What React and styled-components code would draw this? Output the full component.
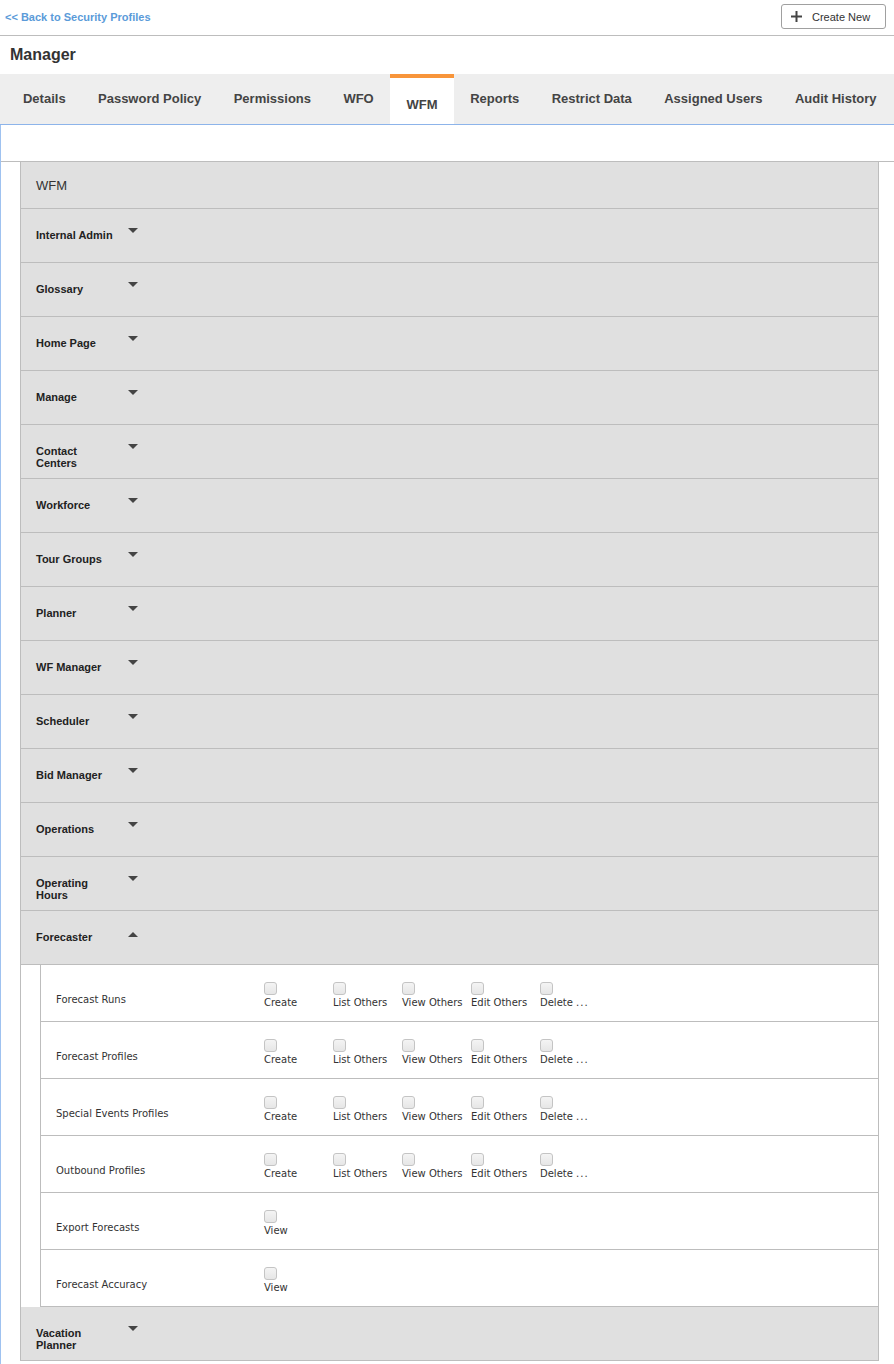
import React from "react";
import styled, { createGlobalStyle } from "styled-components";

const Global = createGlobalStyle`
  html, body { margin: 0; padding: 0; background: #fff; }
  body { font-family: "Liberation Sans", Arial, sans-serif; color: #333; }
  * { box-sizing: border-box; }
`;

const Page = styled.div`
  width: 894px;
`;

const TopBar = styled.div`
  height: 36px;
  border-bottom: 1px solid #bdbdbd;
  display: flex;
  align-items: flex-start;
  justify-content: space-between;
  padding: 0 8px 0 5px;
`;

const BackLink = styled.a`
  font-size: 11px;
  font-weight: bold;
  color: #5b9bd9;
  text-decoration: none;
  line-height: 12px;
  margin-top: 11px;
`;

const CreateButton = styled.button`
  margin-top: 4px;
  height: 25px;
  width: 105px;
  border: 1px solid #a0a0a0;
  border-radius: 3px;
  background: #fff;
  display: flex;
  align-items: center;
  padding: 0 0 0 9px;
  gap: 10px;
  font-family: "Liberation Sans", Arial, sans-serif;
  font-size: 11px;
  color: #333;
`;

const Title = styled.h1`
  margin: 0;
  height: 38px;
  padding: 9px 0 0 10px;
  font-size: 16px;
  line-height: 19px;
  font-weight: bold;
  color: #333;
`;

const TabBar = styled.div`
  height: 51px;
  background: #eeeeee;
  border-bottom: 1px solid #8db4ea;
  display: flex;
  padding-left: 6.8px;
`;

const Tab = styled.div`
  height: 50px;
  padding: 17px 16.2px 0;
  font-size: 13px;
  line-height: 15px;
  font-weight: bold;
  color: #444;
  white-space: nowrap;
  background: ${(p) => (p.$active ? "#fff" : "transparent")};
  border-top: ${(p) => (p.$active ? "4px solid #f8953a" : "0")};
  ${(p) => (p.$active ? "padding: 19px 16.5px 0;" : "")}
`;

const Content = styled.div`
  border-left: 1px solid #9fc2f0;
  padding-bottom: 40px;
`;

const Toolbar = styled.div`
  height: 37px;
  border-bottom: 1px solid #bdbdbd;
`;

const Panel = styled.div`
  margin-left: 19px;
  width: 859px;
  border-left: 1px solid #bdbdbd;
  border-right: 1px solid #bdbdbd;
`;

const PanelHeader = styled.div`
  height: 47px;
  background: #e0e0e0;
  border-bottom: 1px solid #bdbdbd;
  padding: 16px 0 0 15px;
  font-size: 13px;
  line-height: 15px;
  color: #333;
`;

const Section = styled.div`
  height: 54px;
  background: #e0e0e0;
  border-bottom: 1px solid #bdbdbd;
  display: flex;
  align-items: flex-start;
  padding: 20px 0 0 15px;
`;

const SectionLabel = styled.div`
  width: 82px;
  font-size: 11px;
  line-height: 12px;
  font-weight: bold;
  color: #222;
`;

const Caret = styled.span`
  margin-left: 10px;
  margin-top: ${(p) => (p.$up ? "1px" : "-1px")};
  width: 0;
  height: 0;
  border-left: 5px solid transparent;
  border-right: 5px solid transparent;
  ${(p) =>
    p.$up ? "border-bottom: 5px solid #444;" : "border-top: 5px solid #444;"}
`;

const SubPanel = styled.div`
  margin-left: 19px;
  background: #fff;
  border-left: 1px solid #bdbdbd;
`;

const SubRow = styled.div`
  height: 57px;
  border-bottom: 1px solid #bdbdbd;
  display: flex;
  align-items: flex-start;
  padding: 17px 0 0 15px;
  font-family: "DejaVu Sans", Verdana, sans-serif;
  font-size: 10px;
  color: #333;
`;

const SubLabel = styled.div`
  width: 208px;
  line-height: 12px;
  margin-top: 12px;
`;

const Perm = styled.div`
  width: 69px;
  display: flex;
  flex-direction: column;
  align-items: flex-start;
`;

const Check = styled.span`
  width: 13px;
  height: 13px;
  border: 1px solid #c4c4c4;
  border-radius: 3px;
  background: linear-gradient(#f4f4f4, #e6e6e6);
`;

const PermText = styled.span`
  margin-top: 2px;
  line-height: 12px;
  white-space: nowrap;
  color: #333;
`;

const Dots = styled.span`
  letter-spacing: 1px;
`;

const sections = [
  "Internal Admin",
  "Glossary",
  "Home Page",
  "Manage",
  "Contact Centers",
  "Workforce",
  "Tour Groups",
  "Planner",
  "WF Manager",
  "Scheduler",
  "Bid Manager",
  "Operations",
  "Operating Hours",
];

const crud = ["Create", "List Others", "View Others", "Edit Others", "Delete"];
const subRows = [
  { name: "Forecast Runs", perms: crud },
  { name: "Forecast Profiles", perms: crud },
  { name: "Special Events Profiles", perms: crud },
  { name: "Outbound Profiles", perms: crud },
  { name: "Export Forecasts", perms: ["View"] },
  { name: "Forecast Accuracy", perms: ["View"] },
];

const tabs = [
  "Details",
  "Password Policy",
  "Permissions",
  "WFO",
  "WFM",
  "Reports",
  "Restrict Data",
  "Assigned Users",
  "Audit History",
];

export default function App() {
  return (
    <Page>
      <Global />
      <TopBar>
        <BackLink href="#">&lt;&lt; Back to Security Profiles</BackLink>
        <CreateButton>
          <svg width="11" height="11" viewBox="0 0 11 11">
            <path d="M5.5 0v11M0 5.5h11" stroke="#444" strokeWidth="2" />
          </svg>
          Create New
        </CreateButton>
      </TopBar>
      <Title>Manager</Title>
      <TabBar>
        {tabs.map((t) => (
          <Tab key={t} $active={t === "WFM"}>
            {t}
          </Tab>
        ))}
      </TabBar>
      <Content>
        <Toolbar />
        <Panel>
          <PanelHeader>WFM</PanelHeader>
          {sections.map((s) => (
            <Section key={s}>
              <SectionLabel>{s}</SectionLabel>
              <Caret />
            </Section>
          ))}
          <Section>
            <SectionLabel>Forecaster</SectionLabel>
            <Caret $up />
          </Section>
          <SubPanel>
            {subRows.map((r) => (
              <SubRow key={r.name}>
                <SubLabel>{r.name}</SubLabel>
                {r.perms.map((p) => (
                  <Perm key={p}>
                    <Check />
                    <PermText>
                      {p === "Delete" ? (
                        <>
                          Delete <Dots>...</Dots>
                        </>
                      ) : (
                        p
                      )}
                    </PermText>
                  </Perm>
                ))}
              </SubRow>
            ))}
          </SubPanel>
          <Section>
            <SectionLabel>Vacation Planner</SectionLabel>
            <Caret />
          </Section>
        </Panel>
      </Content>
    </Page>
  );
}
